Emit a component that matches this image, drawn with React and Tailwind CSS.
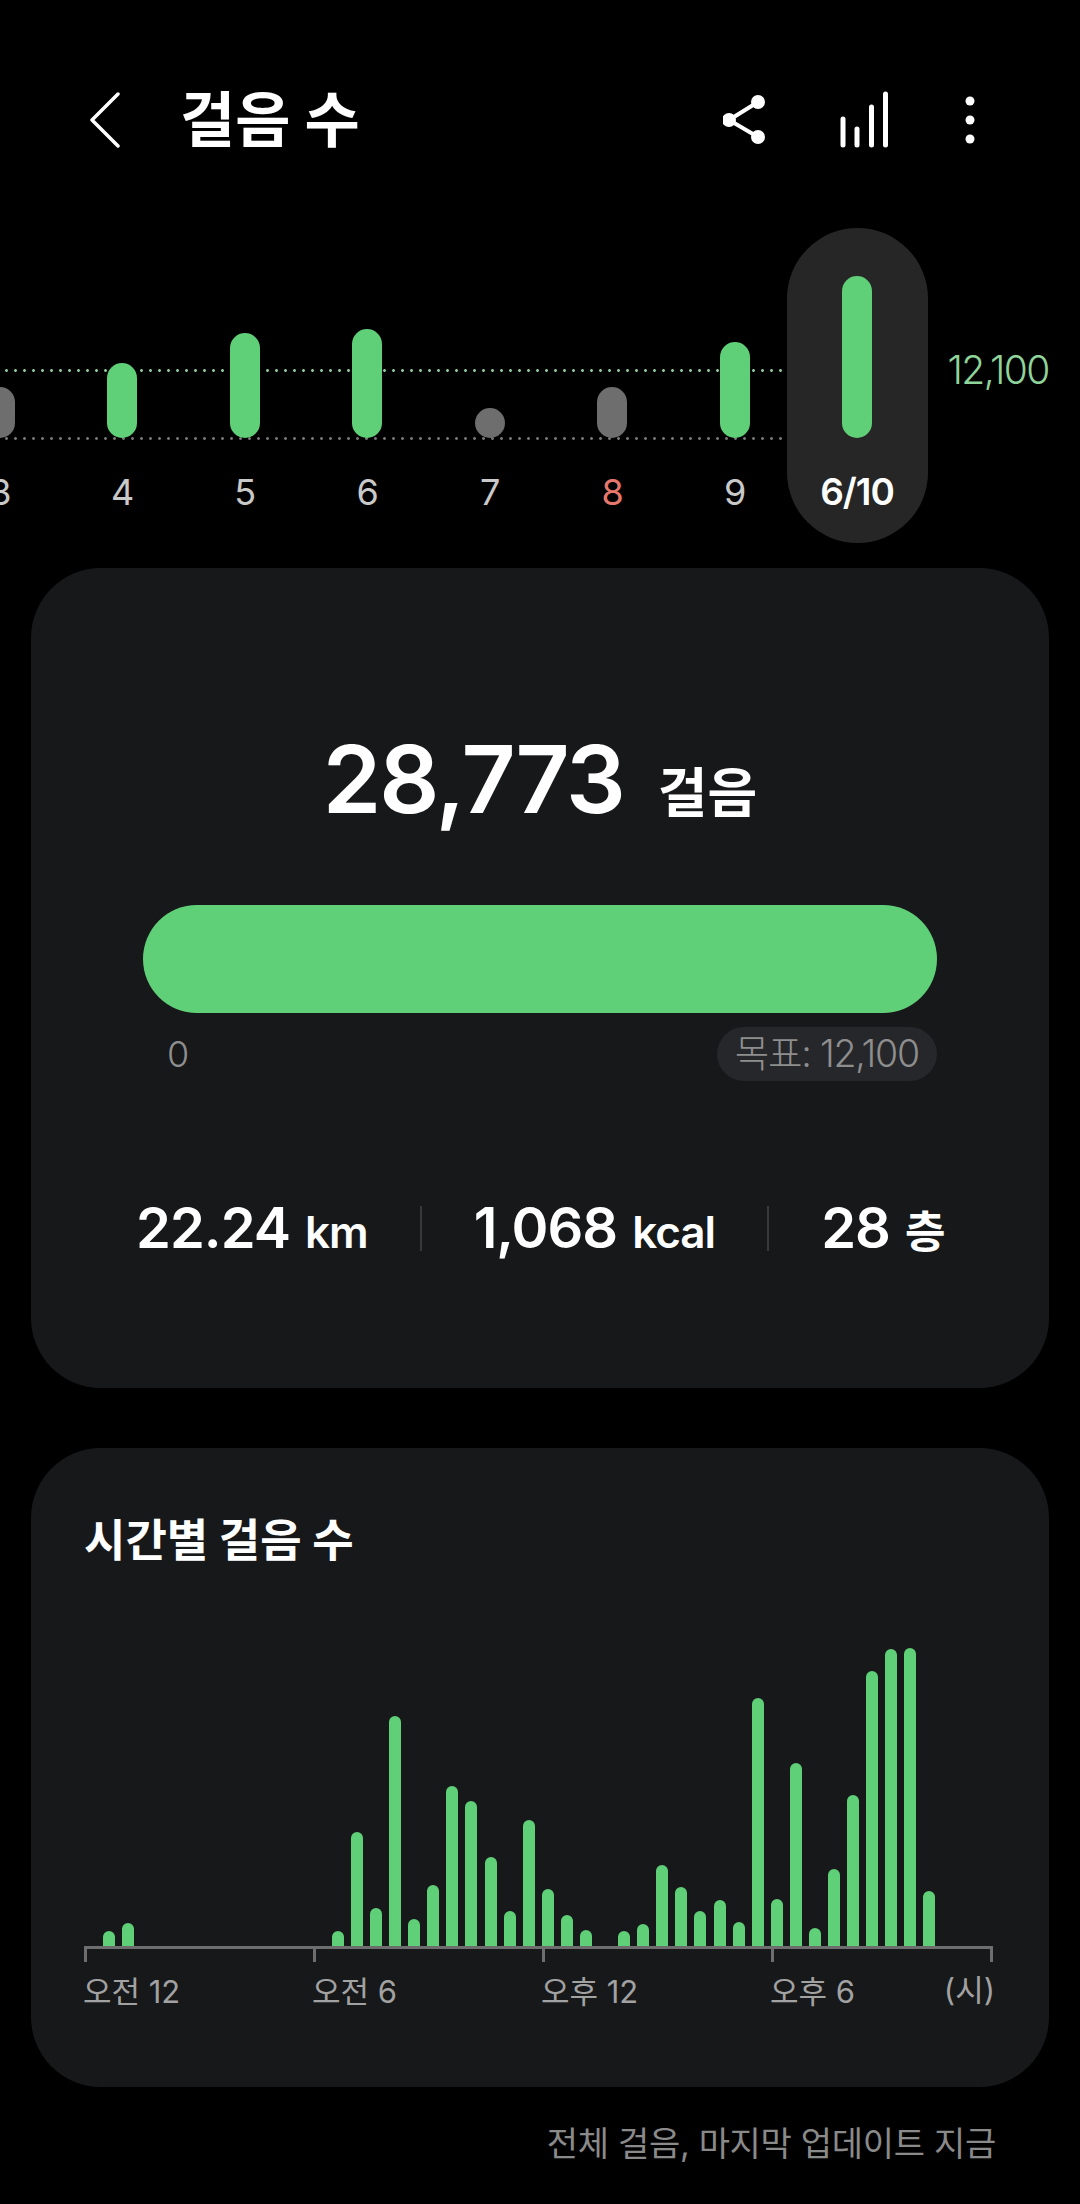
import React from "react";

const FONT = "font-['Inter','Noto_Sans_CJK_KR',sans-serif]";

// daily columns, h = bar height in px
const days = [
  { label: "3", h: 51, color: "bg-[#6e6e6e]", text: "text-[#c9c9c9]" },
  { label: "4", h: 75, color: "bg-[#5fcf78]", text: "text-[#c9c9c9]" },
  { label: "5", h: 105, color: "bg-[#5fcf78]", text: "text-[#c9c9c9]" },
  { label: "6", h: 109, color: "bg-[#5fcf78]", text: "text-[#c9c9c9]" },
  { label: "7", h: 30, color: "bg-[#6e6e6e]", text: "text-[#c9c9c9]" },
  { label: "8", h: 51, color: "bg-[#6e6e6e]", text: "text-[#e8776b]" },
  { label: "9", h: 96, color: "bg-[#5fcf78]", text: "text-[#c9c9c9]" },
];

// hourly bars, one per slot
const hourly = [
  15, 23, 0, 0, 0, 0, 0, 0, 0, 0, 0, 0, 15, 114, 38, 230, 27, 61, 160, 145, 89, 35,
  126, 57, 31, 16, 0, 15, 22, 81, 59, 35, 46, 24, 248, 47, 183, 18, 77, 151, 275, 297, 298, 55,
];

const Stat = ({ value, unit }) => (
  <div className="flex items-baseline gap-[15px] text-white font-semibold">
    <span className="text-[56px] leading-none tracking-[-1px]">{value}</span>
    <span className="text-[44px] leading-none tracking-[-1px]">{unit}</span>
  </div>
);

const App = () => {
  return (
    <div className={`w-[1080px] h-[2204px] bg-black overflow-hidden ${FONT}`}>
      {/* header */}
      <div className="flex items-center h-[80px] mt-[80px]">
        <svg width="30" height="58" viewBox="0 0 30 58" className="ml-[90px]" fill="none" stroke="#fff" strokeWidth="3.5" strokeLinecap="round" strokeLinejoin="round">
          <path d="M28 3 L2 29 L28 55" />
        </svg>
        <h1 className="ml-[60px] text-[60px] leading-none font-bold text-white">걸음 수</h1>
        <svg width="50" height="50" viewBox="0 0 50 50" className="ml-auto" fill="#fff" stroke="#fff" strokeWidth="4">
          <path d="M35 7 L6 25 L35 42" fill="none" />
          <circle cx="35" cy="7" r="5" />
          <circle cx="6" cy="25" r="5" />
          <circle cx="35" cy="42" r="5" />
        </svg>
        <svg width="50" height="58" viewBox="0 0 50 58" className="ml-[66px]" fill="none" stroke="#fff" strokeWidth="5" strokeLinecap="round">
          <path d="M4 28 V54 M18 38 V54 M32.500 16 V54 M46.500 3 V54" />
        </svg>
        <svg width="12" height="50" viewBox="0 0 12 50" className="ml-[75px] mr-[104px]" fill="#fff">
          <circle cx="6" cy="6" r="4.500" />
          <circle cx="6" cy="25" r="4.500" />
          <circle cx="6" cy="44" r="4.500" />
        </svg>
      </div>

      {/* week chart */}
      <div className="relative flex h-[315px] mt-[68px] -ml-[61.500px]">
        <div className="absolute left-0 top-[141px] w-[846px] h-[3px] bg-[radial-gradient(circle,#8fc79a_1.2px,transparent_1.6px)] bg-[length:9px_3px]" />
        <div className="absolute left-0 top-[209px] w-[846px] h-[3px] bg-[radial-gradient(circle,#757575_1.2px,transparent_1.6px)] bg-[length:9px_3px]" />
        {days.map((d) => (
          <div key={d.label} className="relative w-[122.5px] shrink-0 flex flex-col items-center">
            <div className="h-[210px] flex items-end">
              <div className={`w-[30px] rounded-full ${d.color}`} style={{ height: d.h }} />
            </div>
            <span className={`mt-[32px] text-[36px] leading-[44px] tracking-[-1px] ${d.text}`}>{d.label}</span>
          </div>
        ))}
        <div className="relative w-[141px] shrink-0 -ml-[9.500px] flex flex-col items-center rounded-full bg-[#262626]">
          <div className="h-[210px] flex items-end">
            <div className="w-[30px] h-[162px] rounded-full bg-[#5fcf78]" />
          </div>
          <span className="mt-[32px] text-[37px] leading-[44px] font-semibold text-white tracking-[-1px]">6/10</span>
        </div>
        <span className="ml-[20px] mt-[127px] text-[39px] leading-[30px] text-[#8fd49b] tracking-[-1.500px] font-light">12,100</span>
      </div>

      {/* summary card */}
      <div className="mt-[25px] mx-[31px] h-[820px] rounded-[70px] bg-[#17181a] flex flex-col">
        <div className="mt-[164px] flex items-baseline justify-center gap-[34px] text-white font-semibold leading-none">
          <span className="text-[94px] tracking-[-2px]">28,773</span>
          <span className="text-[54px] font-bold">걸음</span>
        </div>
        <div className="mt-[79px] mx-[112px] h-[108px] rounded-full bg-[#5fcf78]" />
        <div className="mt-[14px] mx-[112px] flex items-center justify-between">
          <span className="ml-[24px] text-[36px] leading-none text-[#8e8e8e] font-light">0</span>
          <span className="h-[54px] px-[18px] rounded-full bg-[#26272a] flex items-center text-[37.500px] leading-none text-[#8e8e8e] tracking-[-1.200px] font-light">목표: 12,100</span>
        </div>
        <div className="mt-[119px] ml-[105px] flex items-center">
          <Stat value="22.24" unit="km" />
          <div className="ml-[52px] mr-[52px] w-[2px] h-[45px] bg-[#38393b]" />
          <Stat value="1,068" unit="kcal" />
          <div className="ml-[52px] mr-[52px] w-[2px] h-[45px] bg-[#38393b]" />
          <Stat value="28" unit="층" />
        </div>
      </div>

      {/* hourly card */}
      <div className="mt-[60px] mx-[31px] h-[639px] rounded-[70px] bg-[#17181a] flex flex-col">
        <h2 className="mt-[68px] ml-[53px] text-[45px] leading-[50px] font-bold text-white">시간별 걸음 수</h2>
        <div className="mt-[80px] ml-[72px] h-[300px] flex items-end gap-[7.080px]">
          {hourly.map((h, i) => (
            <div key={i} className="w-[12px] shrink-0 rounded-t-full bg-[#5fcf78]" style={{ height: h }} />
          ))}
        </div>
        <div className="ml-[53px] w-[909px] h-[16px] flex justify-between border-t-[3px] border-[#6e6e6e] relative">
          <span className="w-[3px] h-[13px] bg-[#6e6e6e]" />
          <span className="w-[3px] h-[13px] bg-[#6e6e6e] absolute left-[229px]" />
          <span className="w-[3px] h-[13px] bg-[#6e6e6e] absolute left-[458px]" />
          <span className="w-[3px] h-[13px] bg-[#6e6e6e] absolute left-[687px]" />
          <span className="w-[3px] h-[13px] bg-[#6e6e6e]" />
        </div>
        <div className="relative mt-[10px] ml-[52px] w-[912px] flex text-[31px] leading-[40px] text-[#a2a2a2]">
          <span className="w-[229px]">오전 12</span>
          <span className="w-[229px]">오전 6</span>
          <span className="w-[229px]">오후 12</span>
          <span className="w-[160px]">오후 6</span>
          <span className="ml-auto -mt-[2px]">(시)</span>
        </div>
      </div>

      <p className="mt-[35px] mr-[84px] text-right text-[34px] leading-[44px] tracking-[-0.300px] text-[#8a8a8a]">전체 걸음, 마지막 업데이트 지금</p>
    </div>
  );
};

export default App;
